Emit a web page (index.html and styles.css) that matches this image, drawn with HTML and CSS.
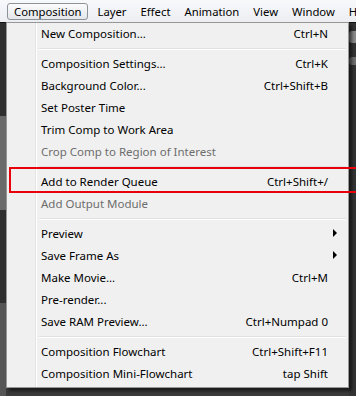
FILE: index.html
```html
<!DOCTYPE html>
<html lang="en">
<head>
<meta charset="UTF-8">
<title>Composition menu</title>
<link rel="stylesheet" href="styles.css">
</head>
<body>
  <div class="menubar">
    <div class="menubar-item active">Composition</div>
    <div class="menubar-item">Layer</div>
    <div class="menubar-item">Effect</div>
    <div class="menubar-item">Animation</div>
    <div class="menubar-item">View</div>
    <div class="menubar-item">Window</div>
    <div class="menubar-item">H</div>
  </div>

  <div class="workspace">
    <div class="panel-left">
      <div class="strip dark"></div>
      <div class="strip light"></div>
      <div class="strip dark"></div>
      <div class="strip mid"></div>
    </div>
    <div class="panel-right">
      <div class="knob"></div>
      <div class="knob small"></div>
    </div>

    <!-- dropdown lies over the panels -->
    <div class="dropdown">
      <div class="item"><span class="label">New Composition...</span><span class="key">Ctrl+N</span></div>
      <div class="sep"></div>
      <div class="item"><span class="label">Composition Settings...</span><span class="key">Ctrl+K</span></div>
      <div class="item"><span class="label">Background Color...</span><span class="key">Ctrl+Shift+B</span></div>
      <div class="item"><span class="label">Set Poster Time</span></div>
      <div class="item"><span class="label">Trim Comp to Work Area</span></div>
      <div class="item disabled"><span class="label">Crop Comp to Region of Interest</span></div>
      <div class="sep"></div>
      <div class="item"><span class="label">Add to Render Queue</span><span class="key">Ctrl+Shift+/</span></div>
      <div class="item disabled"><span class="label">Add Output Module</span></div>
      <div class="sep"></div>
      <div class="item"><span class="label">Preview</span><span class="arrow"></span></div>
      <div class="item"><span class="label">Save Frame As</span><span class="arrow"></span></div>
      <div class="item"><span class="label">Make Movie...</span><span class="key">Ctrl+M</span></div>
      <div class="item"><span class="label">Pre-render...</span></div>
      <div class="item"><span class="label">Save RAM Preview...</span><span class="key">Ctrl+Numpad 0</span></div>
      <div class="sep"></div>
      <div class="item"><span class="label">Composition Flowchart</span><span class="key">Ctrl+Shift+F11</span></div>
      <div class="item"><span class="label">Composition Mini-Flowchart</span><span class="key">tap Shift</span></div>
    </div>

    <div class="highlight-box"></div>
  </div>
</body>
</html>
```

FILE: styles.css
```css
body {
  margin: 0;
  width: 356px;
  height: 396px;
  overflow: hidden;
  background: #4c4c4c;
  font-family: "Noto Sans", "Open Sans", sans-serif;
  font-size: 11.5px;
  color: #000;
}

.menubar {
  display: flex;
  height: 22px;
  padding-left: 7px;
  align-items: center;
  background: linear-gradient(#f8f9fb, #eceef2);
  white-space: nowrap;
  overflow: hidden;
  font-size: 11.3px;
}

.menubar-item {
  padding: 0 6px;
  height: 17px;
  line-height: 15px;
  border: 1px solid transparent;
  box-sizing: border-box;
}

.menubar-item.active {
  padding: 0 6px;
  margin-right: 2px;
  border-color: #8e9399;
  border-radius: 3px;
  background: linear-gradient(#fbfbfc, #e3e6ea);
}

.workspace {
  position: relative;
  height: 374px;
  background: #3a3a3a;
  border-top: 1px solid #111;
  box-sizing: border-box;
}

.panel-left {
  display: flex;
  flex-direction: column;
  width: 6px;
  height: 100%;
}

.strip { flex: 1; }
.strip.dark { background: #2f2f2f; }
.strip.light { background: #6a6a6a; }
.strip.mid { background: #555; }

.panel-right {
  position: absolute;
  right: 0;
  top: 0;
  width: 7px;
  height: 100%;
  background: #333;
}

.knob {
  margin-top: 8px;
  height: 12px;
  background: #8a8a8a;
  border-radius: 3px 0 0 3px;
}

.knob.small {
  margin-top: 14px;
  height: 8px;
  background: #6f6f6f;
}

.dropdown {
  position: absolute;
  left: 6px;
  top: -1px;
  width: 343px;
  padding: 0 2px 2px 2px;
  box-sizing: border-box;
  background: #f0f0f0;
  border: 1px solid #979797;
  box-shadow: 3px 3px 3px rgba(0, 0, 0, 0.55);
  background-image: linear-gradient(90deg, transparent 28px, #e2e3e3 28px, #e2e3e3 29px, #fff 29px, #fff 30px, transparent 30px);
}

.item {
  display: flex;
  align-items: center;
  height: 22px;
  padding: 0 18px 2px 32px;
  box-sizing: border-box;
  white-space: nowrap;
}

.item .label { flex: 1; }

.item.disabled { color: #6d6d6d; }

.arrow {
  width: 0;
  height: 0;
  border-top: 4px solid transparent;
  border-bottom: 4px solid transparent;
  border-left: 4px solid #000;
  margin-right: -9px;
}

.sep {
  height: 8px;
  margin-left: 30px;
  background: linear-gradient(transparent 3px, #e0e0e0 3px, #e0e0e0 4px, #fff 4px, #fff 5px, transparent 5px);
}

.highlight-box {
  position: absolute;
  left: 9px;
  top: 144px;
  width: 360px;
  height: 22px;
  border: 2px solid #e8000b;
}
```
